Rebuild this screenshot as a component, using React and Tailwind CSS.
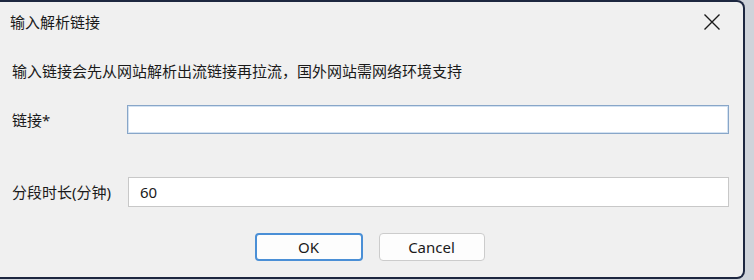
import React from "react";

const font = {
  fontFamily: '"Noto Sans", "Noto Sans CJK SC", sans-serif',
};

const App = () => {
  return (
    <div
      className="w-[754px] h-[280px] bg-[#cfd3da] overflow-hidden text-[#1a1a1a]"
      style={font}
    >
      <div className="w-[745px] h-[279px] bg-[#f0f0f0] border-t-2 border-r-2 border-b-2 border-[#1d2740] rounded-tr-[8px] rounded-br-[8px] flex flex-col">
        {/* title bar */}
        <div className="h-[40px] shrink-0 flex items-center justify-between pl-[10px] pr-[22px]">
          <span className="text-[15px] leading-[20px]">输入解析链接</span>
          <svg width="18" height="18" viewBox="0 0 18 18" className="text-[#1a1a1a]">
            <path
              d="M1.5 1.5 L16.5 16.5 M16.5 1.5 L1.5 16.5"
              stroke="currentColor"
              strokeWidth="1.4"
              fill="none"
            />
          </svg>
        </div>

        <div className="pl-[12px]">
          <div className="mt-[19px] h-[20px] text-[15px] leading-[20px]">
            输入链接会先从网站解析出流链接再拉流，国外网站需网络环境支持
          </div>

          <div className="mt-[24px] flex items-center">
            <span className="w-[115px] text-[15px] leading-[20px]">链接*</span>
            <input
              className="w-[602px] h-[29px] bg-white border border-[#88a6c8] shadow-[inset_0_0_0_1px_#d3e2f2] outline-none px-[10px] text-[15px]"
              defaultValue=""
            />
          </div>

          <div className="mt-[43px] flex items-center">
            <span className="w-[116px] text-[15px] leading-[20px]">分段时长(分钟)</span>
            <input
              className="w-[601px] h-[30px] bg-white border border-[#c8c8c8] outline-none px-[11px] text-[15px]"
              defaultValue="60"
            />
          </div>
        </div>

        <div className="mt-[26px] flex justify-center gap-[16px] pr-[4px]">
          <button className="w-[108px] h-[28px] bg-[#fdfdfd] border-2 border-[#4a8fd6] rounded-[4px] text-[15px] leading-none">
            OK
          </button>
          <button className="w-[106px] h-[28px] bg-[#fdfdfd] border border-[#cccccc] rounded-[4px] text-[15px] leading-none">
            Cancel
          </button>
        </div>
      </div>
    </div>
  );
};

export default App;
